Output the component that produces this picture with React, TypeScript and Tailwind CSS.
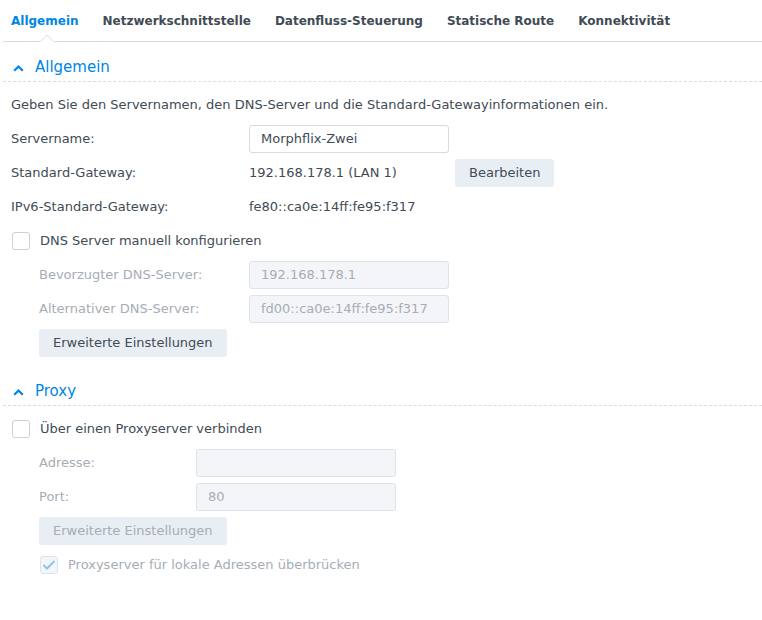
import React from "react";

const font = { fontFamily: '"DejaVu Sans", Verdana, sans-serif' };

function Chevron() {
  return (
    <svg width="11" height="8" viewBox="0 0 11 8" className="mr-[11px]">
      <path d="M1.2 6.8 L5.5 2.5 L9.8 6.8" fill="none" stroke="#0086e5" strokeWidth="2.2" />
    </svg>
  );
}

function SectionHeader({ title }: { title: string }) {
  return (
    <div className="ml-[3px] flex h-[40px] items-center border-b border-dashed border-[#d9dde3] pl-[10px] pt-[12px]">
      <Chevron />
      <span className="text-[15px] text-[#0086e5]">{title}</span>
    </div>
  );
}

function Checkbox({ checked, disabled }: { checked?: boolean; disabled?: boolean }) {
  return (
    <div
      className={`flex h-[18px] w-[18px] items-center justify-center rounded-[3px] border ${
        disabled ? "border-[#dde3ea] bg-[#f3f6f9]" : "border-[#c9d1da] bg-white"
      }`}
    >
      {checked && (
        <svg width="14" height="12" viewBox="0 0 14 12">
          <path d="M1.5 6 L5 9.5 L12.5 2" fill="none" stroke="#8fc3ef" strokeWidth="2" />
        </svg>
      )}
    </div>
  );
}

function Row({ label, children, labelW = "w-[238px]", indent = false, disabled = false }: any) {
  return (
    <div className={`flex h-[34px] items-center ${indent ? "pl-[39px]" : "pl-[11px]"}`}>
      <div className={`${labelW} shrink-0 ${disabled ? "text-[#a6adb5]" : "text-[#414b55]"}`}>{label}</div>
      {children}
    </div>
  );
}

function Input({ value, disabled }: { value: string; disabled?: boolean }) {
  return (
    <div
      className={`flex h-[28px] w-[200px] items-center rounded-[3px] border px-[11px] ${
        disabled ? "border-[#dde3ea] bg-[#f3f5f8] text-[#a6adb5]" : "border-[#d3dbe4] bg-white text-[#414b55]"
      }`}
    >
      {value}
    </div>
  );
}

function Button({ label, disabled }: { label: string; disabled?: boolean }) {
  return (
    <div
      className={`flex h-[28px] items-center justify-center rounded-[3px] bg-[#e9eef4] px-[14px] ${
        disabled ? "text-[#a6adb5]" : "text-[#414b55]"
      }`}
    >
      {label}
    </div>
  );
}

export default function App() {
  const tabs = ["Allgemein", "Netzwerkschnittstelle", "Datenfluss-Steuerung", "Statische Route", "Konnektivität"];
  return (
    <div className="h-[620px] w-[762px] bg-white text-[13px] text-[#414b55]" style={font}>
      <div className="relative ml-[3px] flex h-[42px] items-center gap-[24px] border-b border-[#d6dde5] pl-[8px]">
        {tabs.map((t, i) => (
          <span key={t} className={`text-[12px] font-bold ${i === 0 ? "text-[#0086e5]" : "text-[#414b55]"}`}>
            {t}
          </span>
        ))}
        <svg width="14" height="8" viewBox="0 0 14 8" className="absolute bottom-[-1px] left-[37px]">
          <path d="M0 8 L7 1 L14 8" fill="white" stroke="#d6dde5" strokeWidth="1" />
          <rect x="0" y="7.5" width="14" height="1" fill="white" />
        </svg>
      </div>

      <SectionHeader title="Allgemein" />
      <div className="flex h-[40px] items-center pl-[11px] pt-[6px]">
        Geben Sie den Servernamen, den DNS-Server und die Standard-Gatewayinformationen ein.
      </div>
      <Row label="Servername:">
        <Input value="Morphflix-Zwei" />
      </Row>
      <Row label="Standard-Gateway:">
        <div className="w-[206px]">192.168.178.1 (LAN 1)</div>
        <Button label="Bearbeiten" />
      </Row>
      <Row label="IPv6-Standard-Gateway:">
        <div>fe80::ca0e:14ff:fe95:f317</div>
      </Row>
      <div className="flex h-[34px] items-center gap-[10px] pl-[12px]">
        <Checkbox />
        <span>DNS Server manuell konfigurieren</span>
      </div>
      <Row label="Bevorzugter DNS-Server:" labelW="w-[210px]" indent disabled>
        <Input value="192.168.178.1" disabled />
      </Row>
      <Row label="Alternativer DNS-Server:" labelW="w-[210px]" indent disabled>
        <Input value="fd00::ca0e:14ff:fe95:f317" disabled />
      </Row>
      <div className="flex h-[34px] items-center pl-[39px]">
        <Button label="Erweiterte Einstellungen" />
      </div>

      <div className="h-[6px]" />
      <SectionHeader title="Proxy" />
      <div className="flex h-[40px] items-center gap-[10px] pl-[12px] pt-[6px]">
        <Checkbox />
        <span>Über einen Proxyserver verbinden</span>
      </div>
      <Row label="Adresse:" labelW="w-[157px]" indent disabled>
        <Input value="" disabled />
      </Row>
      <Row label="Port:" labelW="w-[157px]" indent disabled>
        <Input value="80" disabled />
      </Row>
      <div className="flex h-[34px] items-center pl-[39px]">
        <Button label="Erweiterte Einstellungen" disabled />
      </div>
      <div className="flex h-[34px] items-center gap-[10px] pl-[40px]">
        <Checkbox checked disabled />
        <span className="text-[#a6adb5]">Proxyserver für lokale Adressen überbrücken</span>
      </div>
    </div>
  );
}
